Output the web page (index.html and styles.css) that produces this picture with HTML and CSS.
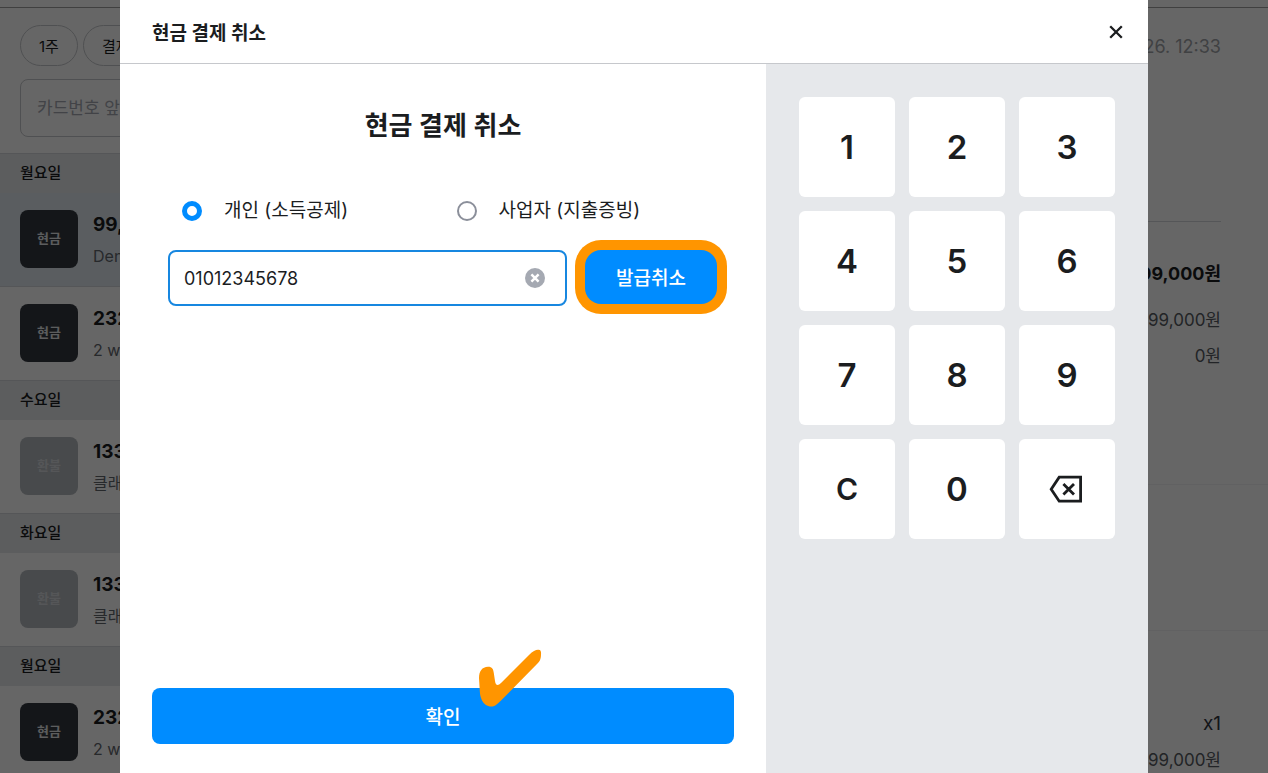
FILE: index.html
```html
<!DOCTYPE html>
<html lang="ko">
<head>
    <meta charset="UTF-8">
    <meta name="viewport" content="width=device-width, initial-scale=1.0">
    <title>현금 결제 취소</title>
    <link rel="stylesheet" href="styles.css">
</head>
<body>
    <div class="page">
        <div class="topbar"></div>
        <div class="columns">
            <div class="history">
                <div class="filters">
                    <button class="pill" type="button">1주</button>
                    <button class="pill" type="button">결제</button>
                </div>
                <input class="search" type="text" placeholder="카드번호 앞" aria-label="카드번호">

                <h3 class="day">월요일</h3>
                <div class="payment selected">
                    <div class="tile">현금</div>
                    <div class="info">
                        <strong>99,000원</strong>
                        <span>Denim</span>
                    </div>
                </div>
                <div class="payment">
                    <div class="tile">현금</div>
                    <div class="info">
                        <strong>232,000원</strong>
                        <span>2 way</span>
                    </div>
                </div>

                <h3 class="day">수요일</h3>
                <div class="payment">
                    <div class="tile refund">환불</div>
                    <div class="info">
                        <strong>133,000원</strong>
                        <span>클래식</span>
                    </div>
                </div>

                <h3 class="day">화요일</h3>
                <div class="payment">
                    <div class="tile refund">환불</div>
                    <div class="info">
                        <strong>133,000원</strong>
                        <span>클래식</span>
                    </div>
                </div>

                <h3 class="day">월요일</h3>
                <div class="payment">
                    <div class="tile">현금</div>
                    <div class="info">
                        <strong>232,000원</strong>
                        <span>2 way</span>
                    </div>
                </div>
            </div>

            <div class="detail">
                <div class="date">26. 12:33</div>
                <div class="totals">
                    <strong>99,000원</strong>
                    <span>99,000원</span>
                    <span>0원</span>
                </div>
                <div class="blank"></div>
                <div class="item">
                    <span class="count">x1</span>
                    <span>99,000원</span>
                </div>
            </div>
        </div>
    </div>

    <div class="overlay">
        <div class="modal" role="dialog" aria-labelledby="modal-title">
            <div class="modal-header">
                <h1 id="modal-title">현금 결제 취소</h1>
                <button class="close" type="button" aria-label="닫기">
                    <svg width="16" height="16" viewBox="0 0 16 16">
                        <path d="M2.2 2.2L13.8 13.8M13.8 2.2L2.2 13.8" stroke="#1b1d1f" stroke-width="2.3" fill="none"/>
                    </svg>
                </button>
            </div>

            <div class="modal-body">
                <form class="receipt">
                    <h2>현금 결제 취소</h2>
                    <div class="fields">
                        <div class="types">
                            <label><input type="radio" name="type" checked>개인 (소득공제)</label>
                            <label><input type="radio" name="type">사업자 (지출증빙)</label>
                        </div>
                        <div class="number-row">
                            <div class="number-box">
                                <input type="text" value="01012345678" aria-label="휴대폰 번호">
                                <button class="clear" type="button" aria-label="지우기">
                                    <svg width="20" height="20" viewBox="0 0 20 20">
                                        <circle cx="10" cy="10" r="10" fill="#a5a9b2"/>
                                        <path d="M6.4 6.4L13.6 13.6M13.6 6.4L6.4 13.6" stroke="#fff" stroke-width="2.5" fill="none"/>
                                    </svg>
                                </button>
                            </div>
                            <button class="cancel" type="button">발급취소</button>
                        </div>
                    </div>
                    <div class="footer">
                        <button class="confirm" type="button">확인</button>
                        <svg class="check" width="64" height="58" viewBox="0 0 64 58">
                            <path d="M1 29C1 22 4 18 10 17.7C14 17.6 15.4 20 15.8 24L17 32C17.6 36.6 20 37 23 34L51 6C55 2 58 0.6 60.5 0.8C63 1 63.2 3 63 6C62.8 10 62 12 59 15L24 50.5C20 54.6 17 57.6 13.5 57.6C9 57.6 5.5 54.5 4 51.5C2.5 48 2 46 1.8 42Z" fill="#ff9500"/>
                        </svg>
                    </div>
                </form>

                <div class="keypad">
                    <button type="button">1</button>
                    <button type="button">2</button>
                    <button type="button">3</button>
                    <button type="button">4</button>
                    <button type="button">5</button>
                    <button type="button">6</button>
                    <button type="button">7</button>
                    <button type="button">8</button>
                    <button type="button">9</button>
                    <button class="reset" type="button">C</button>
                    <button type="button">0</button>
                    <button type="button" aria-label="한 글자 지우기">
                        <svg width="36" height="32" viewBox="0 0 36 32">
                            <path d="M10.2 4.2H31.6V28.2H10.2L2.2 16.2Z" stroke="#1b1d1f" stroke-width="2.8" fill="none"/>
                            <path d="M14.4 10.9L25 21.5M25 10.9L14.4 21.5" stroke="#1b1d1f" stroke-width="2.8" fill="none"/>
                        </svg>
                    </button>
                </div>
            </div>
        </div>
    </div>
</body>
</html>
```
FILE: styles.css
```css
* {
    box-sizing: border-box;
}
body {
    margin: 0;
    height: 100vh;
    overflow: hidden;
    font-family: Inter, "Noto Sans CJK KR", sans-serif;
    color: #1b1d1f;
}
h1, h2, h3 {
    margin: 0;
}
button, input {
    font-family: inherit;
    color: inherit;
}
button {
    padding: 0;
    border: none;
    background: none;
}

/* payment history behind the dialog */
.page {
    height: 100vh;
    overflow: hidden;
    background-color: white;
}
.topbar {
    height: 8px;
    border-bottom: 1px solid #a0a0a0;
}
.columns {
    display: flex;
}
.history {
    width: 400px;
}
.filters {
    display: flex;
    gap: 5px;
    padding: 17px 20px 13px;
}
.pill {
    height: 41px;
    padding: 0 18px;
    border: 1px solid #c6c8cc;
    border-radius: 21px;
    font-size: 15px;
}
.search {
    display: block;
    width: 360px;
    height: 58px;
    margin: 0 20px 16px;
    padding: 0 16px;
    border: 1px solid #c6c8cc;
    border-radius: 8px;
    background: none;
    font-size: 17px;
}
.search::placeholder {
    color: #a5a9b2;
}
.day {
    height: 40px;
    padding-left: 20px;
    border-top: 1px solid #d5d8dc;
    background-color: #e6e8eb;
    font-size: 15px;
    font-weight: 500;
    line-height: 38px;
}
.payment {
    display: flex;
    align-items: flex-start;
    gap: 15px;
    padding: 17px 20px 14px;
}
.payment + .payment {
    border-top: 1px solid #d5d8dc;
}
.selected {
    background-color: #e0e9f0;
}
.tile {
    width: 58px;
    height: 58px;
    border-radius: 8px;
    background-color: #33383f;
    color: #e6e8eb;
    font-size: 13px;
    font-weight: 700;
    line-height: 56px;
    text-align: center;
}
.refund {
    background-color: #b4b9be;
    color: #d5d8dc;
}
.info {
    display: flex;
    flex-direction: column;
}
.info strong {
    font-size: 19px;
    line-height: 30px;
}
.info span {
    color: #62666d;
    font-size: 16px;
    line-height: 32px;
}
.detail {
    flex: 1;
    font-size: 17px;
    line-height: 36px;
    text-align: right;
    color: #555a61;
}
.date {
    height: 214px;
    margin: 0 47px;
    padding-top: 21px;
    border-bottom: 1px solid #d5d8dc;
    color: #a0a3a8;
    font-size: 18px;
}
.totals {
    display: flex;
    flex-direction: column;
    height: 263px;
    padding: 34px 47px 0;
    border-bottom: 1px solid #f3f3f4;
}
.totals strong {
    margin-bottom: 10px;
    color: #1b1d1f;
    font-size: 18px;
    font-weight: 700;
}
.blank {
    height: 146px;
    border-bottom: 1px solid #f3f3f4;
}
.item {
    display: flex;
    flex-direction: column;
    padding: 75px 47px 0;
}
.count {
    color: #33383f;
    font-size: 19px;
}

.overlay {
    position: fixed;
    inset: 0;
    padding: 0 120px;
    background-color: rgba(0, 0, 0, 0.6);
}
.modal {
    display: flex;
    flex-direction: column;
    height: 100%;
    background-color: white;
}
.modal-header {
    display: flex;
    align-items: center;
    justify-content: space-between;
    height: 64px;
    padding: 0 24px 0 32px;
    border-bottom: 1px solid #c6c8cc;
}
.modal-header h1 {
    font-size: 19px;
}
.close, .clear {
    display: flex;
}
.modal-body {
    display: flex;
    flex: 1;
}
.receipt {
    display: flex;
    flex: 1;
    flex-direction: column;
    padding: 40px 32px 29px;
}
.receipt h2 {
    font-size: 26px;
    font-weight: 600;
    line-height: 44px;
    text-align: center;
}
.fields {
    padding: 47px 17px 0 16px;
}
.types {
    display: grid;
    grid-template-columns: 1fr 1fr;
    margin-bottom: 23px;
    font-size: 19px;
    line-height: 32px;
}
.types label {
    display: flex;
    align-items: center;
    gap: 22px;
    padding-left: 14px;
}
.types input {
    appearance: none;
    width: 20px;
    height: 20px;
    margin: 0;
    border: 2px solid #8b8f9a;
    border-radius: 50%;
}
.types input:checked {
    border: 5px solid #008cff;
}
.number-row {
    display: flex;
    align-items: flex-start;
    gap: 18px;
}
.number-box {
    display: flex;
    flex: 1;
    align-items: center;
    height: 56px;
    padding: 0 20px 0 14px;
    border: 2px solid #1787e0;
    border-radius: 8px;
}
.number-box input {
    flex: 1;
    min-width: 0;
    padding: 0;
    border: none;
    outline: none;
    font-size: 18px;
}
.cancel {
    width: 132px;
    height: 54px;
    padding-bottom: 2px;
    border-radius: 16px;
    box-shadow: 0 0 0 10px #ff9500;
    background-color: #008cff;
    color: white;
    font-size: 19px;
    font-weight: 500;
}
.footer {
    position: relative;
    margin-top: auto;
}
.confirm {
    display: block;
    width: 100%;
    height: 56px;
    padding-bottom: 2px;
    border-radius: 8px;
    background-color: #008cff;
    color: white;
    font-size: 19px;
    font-weight: 500;
}
.check {
    position: absolute;
    left: 56%;
    bottom: 37px;
}
.keypad {
    display: grid;
    grid-template-columns: repeat(3, 96px);
    grid-auto-rows: 100px;
    gap: 14px;
    padding: 33px;
    background-color: #e6e8eb;
}
.keypad button {
    display: flex;
    align-items: center;
    justify-content: center;
    border-radius: 6px;
    background-color: white;
    font-size: 33px;
    font-weight: 600;
}
.keypad .reset {
    font-size: 30px;
}
```
